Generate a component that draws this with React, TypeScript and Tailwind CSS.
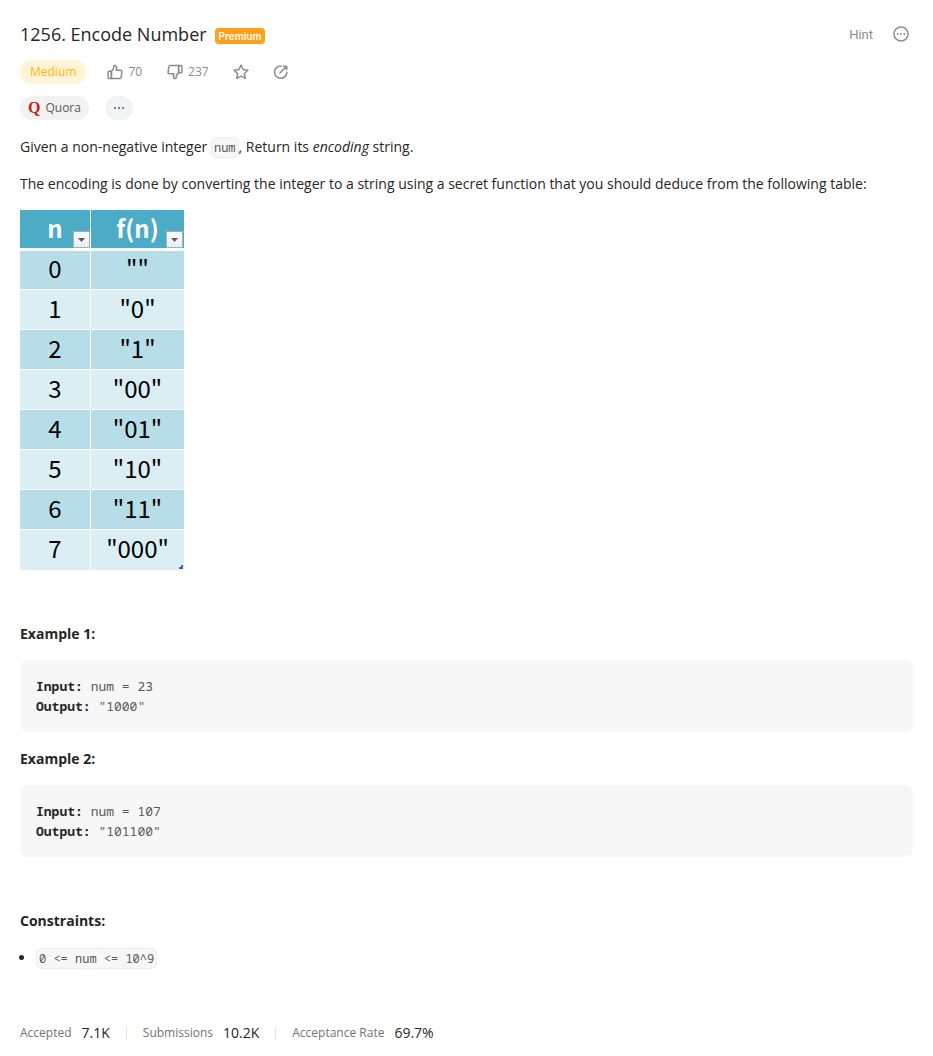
import type { ReactNode } from "react";

const rows: [string, string][] = [
  ["0", '""'],
  ["1", '"0"'],
  ["2", '"1"'],
  ["3", '"00"'],
  ["4", '"01"'],
  ["5", '"10"'],
  ["6", '"11"'],
  ["7", '"000"'],
];

function Icon({ children }: { children: ReactNode }) {
  return (
    <svg
      viewBox="0 0 16 16"
      className="size-4"
      fill="none"
      stroke="currentColor"
      strokeWidth="1.5"
      strokeLinejoin="round"
      strokeLinecap="round"
      aria-hidden="true"
    >
      {children}
    </svg>
  );
}

function ThumbPaths() {
  return (
    <>
      <path d="M4.4 14.6H1.9a.8.8 0 0 1-.8-.8V8a.8.8 0 0 1 .8-.8h2.500z" />
      <path d="M4.400 7.200C6.300 6 6.900 4 7 1.800c.1-.7 2.600-.7 2.600 1.700 0 1-.2 1.900-.5 2.700h4.400c.9 0 1.500.7 1.400 1.600l-.8 5.500c-.1.800-.7 1.300-1.400 1.300H4.400z" />
    </>
  );
}

function Code({ children }: { children: ReactNode }) {
  return (
    <code className="rounded-md border border-[#ececec] bg-[#f7f7f7] px-0.5 py-px font-['Noto_Sans_Mono','DejaVu_Sans_Mono',monospace] text-xs text-[#595959]">
      {children}
    </code>
  );
}

function Example({ n, input, output }: { n: number; input: string; output: string }) {
  return (
    <section>
      <h2 className="font-bold">Example {n}:</h2>
      <pre className="mt-4 rounded-lg bg-[#f7f7f7] p-4 font-['Noto_Sans_Mono','DejaVu_Sans_Mono',monospace] text-[13px]/5 text-[#595959]">
        <strong className="text-[#262626]">Input:</strong> {input}
        {"\n"}
        <strong className="text-[#262626]">Output:</strong> {output}
      </pre>
    </section>
  );
}

function HeadCell({ label, className, filterClassName }: { label: string; className: string; filterClassName: string }) {
  return (
    <th
      scope="col"
      className={`relative h-[41px] border-b-3 border-white bg-[#4bacc6] bg-clip-padding p-0 pb-0.5 font-bold text-white ${className}`}
    >
      {label}
      <button
        type="button"
        aria-label={`Filter ${label}`}
        className={`absolute bottom-0 flex size-[17px] items-center justify-center border border-[#a9adb8] bg-linear-to-b from-white to-[#e9ecf3] ${filterClassName}`}
      >
        <svg viewBox="0 0 7 4" className="h-1 w-[7px]" aria-hidden="true">
          <path d="M0 0h7L3.500 4z" fill="#5b5b5b" />
        </svg>
      </button>
    </th>
  );
}

function Stat({ label, value }: { label: string; value: string }) {
  return (
    <div className="flex items-center gap-2.5 border-l border-[#e5e5e5] px-4 leading-[14px] first:border-l-0 first:pl-0">
      <dt className="text-xs/[14px] text-[#737373]">{label}</dt>
      <dd>{value}</dd>
    </div>
  );
}

export default function App() {
  return (
    <main className="px-5 pt-5 font-['Open_Sans',sans-serif] text-sm/[21px] text-[#262626]">
      <header className="flex h-7 items-center">
        <h1 className="text-lg">1256. Encode Number</h1>
        <span className="mt-1 ml-2 flex h-4 items-center rounded bg-[#ffa116] px-1 font-['Inter',sans-serif] text-[10px] font-semibold text-white">
          Premium
        </span>
        <button type="button" className="ml-auto font-['Roboto',sans-serif] text-[13px] text-[#8c8c8c]">
          Hint
        </button>
        <button type="button" aria-label="More options" className="mr-1 ml-5 text-[#8c8c8c]">
          <Icon>
            <circle cx="8" cy="8" r="7" />
            <g fill="currentColor" stroke="none">
              <circle cx="4.700" cy="8" r="1" />
              <circle cx="8" cy="8" r="1" />
              <circle cx="11.300" cy="8" r="1" />
            </g>
          </Icon>
        </button>
      </header>

      <div className="mt-3 flex h-6 items-center text-xs text-[#8c8c8c]">
        <span className="flex h-6 items-center rounded-full bg-[#fff4d6] px-2.5 text-[#ffb800]">Medium</span>
        <button type="button" className="ml-[21px] flex items-center gap-[5px]">
          <Icon>
            <ThumbPaths />
          </Icon>
          70
        </button>
        <button type="button" className="ml-[25px] flex items-center gap-[5px]">
          <Icon>
            <g transform="rotate(180 8 8)">
              <ThumbPaths />
            </g>
          </Icon>
          237
        </button>
        <button type="button" aria-label="Favorite" className="ml-6">
          <Icon>
            <path d="M8 1.200l2.100 4.300 4.800.7-3.500 3.300.9 4.800L8 12.100l-4.300 2.200.9-4.800L1.100 6.200l4.800-.7z" />
          </Icon>
        </button>
        <button type="button" aria-label="Share" className="ml-6">
          <Icon>
            <path d="M8.200 1.900A6.200 6.200 0 1 0 13.900 8.200" />
            <path d="M7 9l5-5" />
            <path d="M10.500 2h3.500v3.500z" fill="currentColor" strokeWidth="1" />
          </Icon>
        </button>
      </div>

      <div className="mt-3 flex h-6 items-center gap-4 text-xs text-[#595959]">
        <a href="#quora" className="flex h-6 items-center gap-[5px] rounded-full bg-[#f2f2f2] px-2">
          <span aria-hidden="true" className="font-['Liberation_Serif',serif] text-base/6 font-bold text-[#c9221b]">
            Q
          </span>
          Quora
        </a>
        <button
          type="button"
          aria-label="More companies"
          className="flex h-6 w-7 items-center justify-center rounded-full bg-[#f2f3f4]"
        >
          <svg viewBox="0 0 10 2" className="h-0.5 w-2.5" fill="#595959" aria-hidden="true">
            <circle cx="1" cy="1" r="1" />
            <circle cx="5" cy="1" r="1" />
            <circle cx="9" cy="1" r="1" />
          </svg>
        </button>
      </div>

      <p className="mt-4">
        Given a non-negative integer <Code>num</Code>, Return its <em>encoding</em> string.
      </p>
      <p className="mt-4">
        The encoding is done by converting the integer to a string using a secret function that you should deduce
        from the following table:
      </p>

      <div className="relative mt-4 w-fit">
        <table className="border-separate border-spacing-0 text-center font-['Noto_Sans_CJK_SC',sans-serif] text-2xl/8">
          <thead>
            <tr>
              <HeadCell label="n" className="w-[71px] border-r" filterClassName="right-0" />
              <HeadCell label="f(n)" className="w-[93px]" filterClassName="right-px" />
            </tr>
          </thead>
          <tbody className="text-black">
            {rows.map(([n, code]) => (
              <tr key={n} className="group bg-[#daeef3] odd:bg-[#b7dde8]">
                <td className="h-10 border-r border-b border-white p-0 pb-1 group-first:h-[39px] group-last:border-b-0">{n}</td>
                <td className="h-10 border-b border-white p-0 pb-1 group-first:h-[39px] group-last:border-b-0">{code}</td>
              </tr>
            ))}
          </tbody>
        </table>
        <svg viewBox="0 0 4 4" className="absolute right-px bottom-px size-1" fill="#4a5fb0" aria-hidden="true">
          <path d="M2 0h2v4H0V2h2z" />
        </svg>
      </div>

      <div className="mt-[53px] flex flex-col gap-4">
        <Example n={1} input="num = 23" output={'"1000"'} />
        <Example n={2} input="num = 107" output={'"101100"'} />
      </div>

      <h2 className="mt-[53px] font-bold">Constraints:</h2>
      <ul className="mt-4 list-disc pl-4">
        <li>
          <Code>{"0 <= num <= 10^9"}</Code>
        </li>
      </ul>

      <dl className="mt-[58px] flex items-center pb-4">
        <Stat label="Accepted" value="7.1K" />
        <Stat label="Submissions" value="10.2K" />
        <Stat label="Acceptance Rate" value="69.7%" />
      </dl>
    </main>
  );
}
